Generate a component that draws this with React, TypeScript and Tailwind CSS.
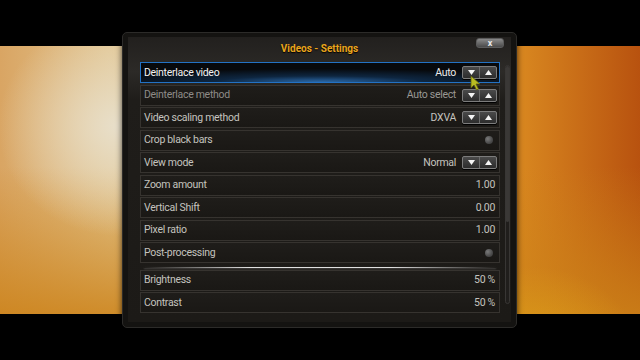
type Row = {
  label: string;
  value?: string;
  kind: 'spin' | 'radio' | 'value';
  focused?: boolean;
  dim?: boolean;
};

const rows: Row[] = [
  { label: 'Deinterlace video', value: 'Auto', kind: 'spin', focused: true },
  { label: 'Deinterlace method', value: 'Auto select', kind: 'spin', dim: true },
  { label: 'Video scaling method', value: 'DXVA', kind: 'spin' },
  { label: 'Crop black bars', kind: 'radio' },
  { label: 'View mode', value: 'Normal', kind: 'spin' },
  { label: 'Zoom amount', value: '1.00', kind: 'value' },
  { label: 'Vertical Shift', value: '0.00', kind: 'value' },
  { label: 'Pixel ratio', value: '1.00', kind: 'value' },
  { label: 'Post-processing', kind: 'radio' },
];

const lower: Row[] = [
  { label: 'Brightness', value: '50 %', kind: 'value' },
  { label: 'Contrast', value: '50 %', kind: 'value' },
];

function Spinner() {
  return (
    <div className="flex h-[13px] w-[35px] ml-[6px] rounded-[2px] border border-[#7c7c7c] bg-[linear-gradient(to_bottom,#4a4a4a,#2c2c2c)] shadow-[0_1px_0_#000]">
      <div className="flex flex-1 items-center justify-center">
        <svg width="7" height="5" viewBox="0 0 7 5">
          <polygon points="0,0 7,0 3.5,5" fill="#f4f4f4" />
        </svg>
      </div>
      <div className="flex flex-1 items-center justify-center border-l border-[#6a6a6a]">
        <svg width="7" height="5" viewBox="0 0 7 5">
          <polygon points="3.5,0 7,5 0,5" fill="#f4f4f4" />
        </svg>
      </div>
    </div>
  );
}

function SettingRow({ row }: { row: Row }) {
  const box = row.focused
    ? 'border-[#2372c4] bg-[radial-gradient(ellipse_65%_70%_at_50%_100%,#2a68a8_0%,#0e2640_45%,#07090c_100%)]'
    : 'border-[#36332f] bg-[linear-gradient(to_bottom,#1f1d1a,#1a1815)]';
  const labelColor = row.focused ? 'text-[#f2f2f2]' : row.dim ? 'text-[#8e8c88]' : 'text-[#c4c3bf]';
  const valueColor = row.focused ? 'text-[#ececec]' : row.dim ? 'text-[#9a9894]' : 'text-[#c4c3bf]';
  return (
    <div className={`flex h-[21px] shrink-0 items-center border pl-[3px] pr-[2px] ${box}`}>
      <span className={`flex-1 ${labelColor}`}>{row.label}</span>
      {row.kind === 'radio' ? (
        <span className="mr-[4px] h-[8px] w-[8px] rounded-full bg-[radial-gradient(circle_at_35%_35%,#7a7a7a,#4a4a4a_60%,#333_100%)]" />
      ) : (
        <span className={`${valueColor} ${row.kind === 'value' ? 'mr-[2px]' : ''}`}>{row.value}</span>
      )}
      {row.kind === 'spin' && <Spinner />}
    </div>
  );
}

export default function App() {
  return (
    <div className="relative h-[360px] w-[640px] overflow-hidden bg-black text-[10.5px] tracking-[-0.3px] [font-family:Roboto,'Noto_Sans',sans-serif]">
      {/* background picture band */}
      <div className="mt-[46px] h-[268px] w-full bg-[radial-gradient(ellipse_120px_110px_at_118px_80px,#e8dfca_0%,rgba(232,223,202,0)_100%),radial-gradient(ellipse_110px_90px_at_530px_310px,rgba(228,168,26,0.75)_0%,rgba(228,168,26,0)_100%),linear-gradient(to_bottom,rgba(0,0,0,0)_45%,rgba(204,130,24,0.85)_100%),linear-gradient(to_right,#d9a563_0%,#e2c590_17%,#d89a40_60%,#d7851f_82%,#b8520f_100%)]" />

      {/* dialog */}
      <div className="absolute left-[122px] top-[32px] h-[296px] w-[395px] rounded-[5px] border border-[#2c2b29] bg-[#141311] px-[5px] pb-[5px] pt-[4px] shadow-[0_0_6px_rgba(0,0,0,0.7)]">
        <div className="flex h-full flex-col bg-[linear-gradient(to_bottom,#22201e_0%,#2c2a27_12%,#1f1d1a_22%,#1c1a17_100%)]">
          <div className="relative flex h-[25px] shrink-0 items-center justify-center pb-[3px]">
            <span className="text-[10px] font-bold tracking-[0px] text-[#eaa51c] [text-shadow:0_1px_1px_#000]">
              Videos - Settings
            </span>
            <div className="absolute right-[7px] top-[1px] flex h-[10px] w-[28px] items-center justify-center rounded-[3px] border border-[#5c5c5c] bg-[linear-gradient(to_bottom,#8a8a8a,#4a4a4a)]">
              <span className="text-[9px] leading-none font-bold text-[#e8e8e8]">x</span>
            </div>
          </div>
          <div className="flex">
            <div className="ml-[12px] flex h-[251px] w-[360px] flex-col gap-[1.5px] overflow-hidden">
              {rows.map((r) => (
                <SettingRow key={r.label} row={r} />
              ))}
              <div className="flex h-[3.5px] shrink-0 items-end px-[4px]">
                <div className="h-[1px] w-full bg-[linear-gradient(to_right,rgba(255,255,255,0),#e0e0e0_30%,#e0e0e0_70%,rgba(255,255,255,0))] shadow-[0_1px_2px_rgba(255,255,255,0.25)]" />
              </div>
              {lower.map((r) => (
                <SettingRow key={r.label} row={r} />
              ))}
            </div>
            <div className="ml-[5px] mt-[3px] h-[239px] w-[5px] rounded-full border border-[#383634] bg-[#201e1c]">
              <div className="h-[156px] w-full rounded-full bg-[#3a3836]" />
            </div>
          </div>
        </div>
      </div>

      {/* mouse pointer */}
      <svg className="absolute left-[470px] top-[75px]" width="11" height="16" viewBox="0 0 11 16">
        <polygon points="1,1 1,13 4,10 6.5,15 8.5,14 6,9 10,9" fill="#b8bc22" stroke="#5a5c10" strokeWidth="0.8" />
      </svg>
    </div>
  );
}
